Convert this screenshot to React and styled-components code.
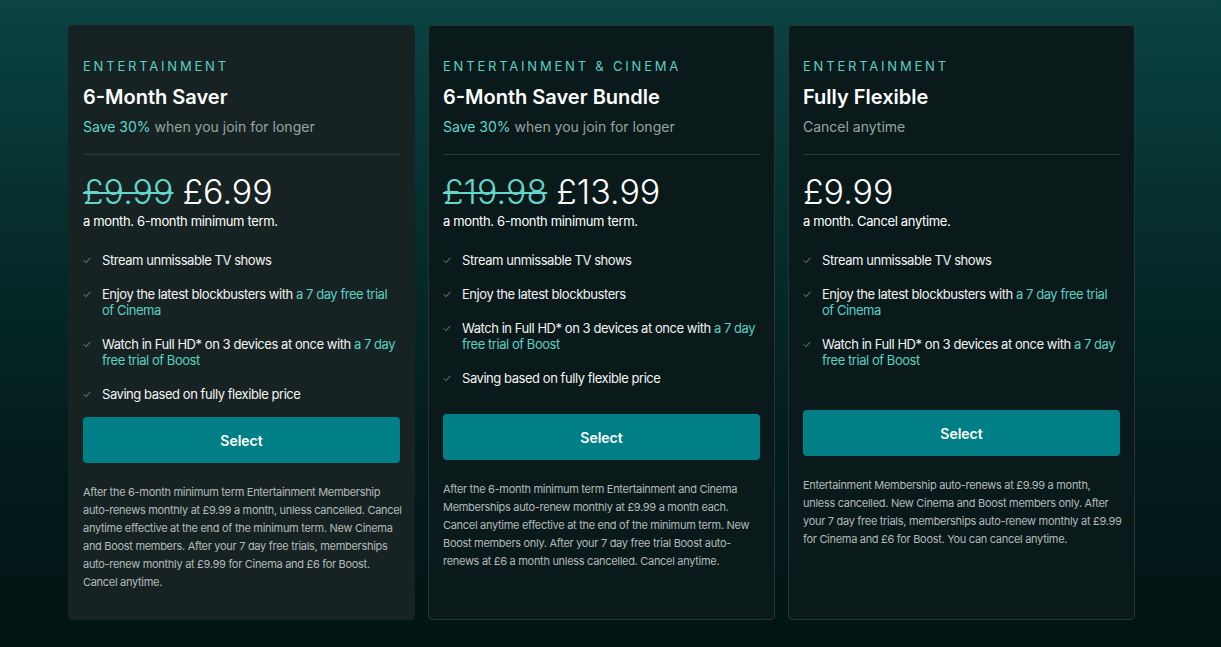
import React from "react";
import styled, { createGlobalStyle } from "styled-components";

const GlobalStyle = createGlobalStyle`
  html, body {
    margin: 0;
    padding: 0;
  }
  body {
    min-height: 647px;
    background: linear-gradient(180deg, #0a4443 0%, #06302f 30%, #031b1b 70%, #021414 100%);
    font-family: Inter, "Noto Sans", "Liberation Sans", sans-serif;
    color: #ffffff;
    -webkit-font-smoothing: antialiased;
  }
`;

const Page = styled.div`
  display: flex;
  gap: 13px;
  padding: 25px 0 0 68px;
  height: 647px;
  box-sizing: border-box;
`;

const Card = styled.div`
  flex: none;
  width: 347px;
  height: 595px;
  box-sizing: border-box;
  padding: 32px 14px 0;
  border-radius: 4px;
  background: ${p => (p.$featured ? "#172322" : "#0a191a")};
  border: 1px solid ${p => (p.$featured ? "#172322" : "#263535")};
`;

const Category = styled.div`
  font-size: 13px;
  line-height: 16px;
  letter-spacing: 2.8px;
  color: #5ccfc3;
  margin-bottom: 10px;
`;

const Title = styled.h2`
  margin: 0 0 7px;
  font-size: 20px;
  line-height: 26px;
  font-weight: 600;
  color: #ffffff;
`;

const Sub = styled.div`
  font-size: 14px;
  line-height: 20px;
  color: #9aa3a3;
  padding-bottom: 17px;
  border-bottom: 1px solid #2d3a3a;
  margin-bottom: 18px;
`;

const Accent = styled.span`
  color: #62d6ca;
`;

const PriceRow = styled.div`
  display: flex;
  align-items: baseline;
  gap: 9px;
  font-size: 34px;
  line-height: 38px;
  font-weight: 300;
  margin-bottom: 1px;
`;

const OldPrice = styled.s`
  color: #62d6ca;
  text-decoration-thickness: 2px;
`;

const Price = styled.span`
  color: #ffffff;
`;

const Term = styled.div`
  font-size: 13px;
  line-height: 18px;
  letter-spacing: -0.35px;
  color: #ffffff;
  margin-bottom: 22px;
`;

const Features = styled.ul`
  list-style: none;
  margin: 0;
  padding: 0;
  display: flex;
  flex-direction: column;
  gap: 18px;
`;

const Feature = styled.li`
  display: flex;
  gap: 11px;
  font-size: 13px;
  line-height: 16px;
  letter-spacing: -0.45px;
  color: #f2f4f4;
`;

const Check = styled.svg`
  flex: none;
  width: 8px;
  height: 16px;
`;

const Link = styled.span`
  color: #5ccfc3;
`;

const SelectButton = styled.button`
  display: block;
  margin-top: ${p => p.$gap}px;
  height: 46px;
  width: 100%;
  border: none;
  border-radius: 4px;
  background: #007f86;
  color: #ffffff;
  font-family: inherit;
  font-size: 14px;
  font-weight: 600;
  cursor: pointer;
`;

const FinePrint = styled.p`
  margin: 20px 0 0;
  font-size: 11px;
  line-height: 18px;
  letter-spacing: -0.3px;
  color: #b3baba;
`;

const FineLine = styled.span`
  display: block;
  white-space: nowrap;
`;

const Tick = () => (
  <Check viewBox="0 0 8 16">
    <path d="M0.8 8.4 L3 10.6 L7.4 5.8" fill="none" stroke="#7d8b8b" strokeWidth="1" />
  </Check>
);

const plans = [
  {
    featured: true,
    category: "ENTERTAINMENT",
    title: "6-Month Saver",
    save: true,
    sub: "when you join for longer",
    old: "£9.99",
    price: "£6.99",
    term: "a month. 6-month minimum term.",
    features: [
      ["Stream unmissable TV shows"],
      ["Enjoy the latest blockbusters with ", "a 7 day free trial of Cinema"],
      ["Watch in Full HD* on 3 devices at once with ", "a 7 day free trial of Boost"],
      ["Saving based on fully flexible price"]
    ],
    gap: 15,
    fine: [
      "After the 6-month minimum term Entertainment Membership",
      "auto-renews monthly at £9.99 a month, unless cancelled. Cancel",
      "anytime effective at the end of the minimum term. New Cinema",
      "and Boost members. After your 7 day free trials, memberships",
      "auto-renew monthly at £9.99 for Cinema and £6 for Boost.",
      "Cancel anytime."
    ]
  },
  {
    category: "ENTERTAINMENT & CINEMA",
    title: "6-Month Saver Bundle",
    save: true,
    sub: "when you join for longer",
    old: "£19.98",
    price: "£13.99",
    term: "a month. 6-month minimum term.",
    features: [
      ["Stream unmissable TV shows"],
      ["Enjoy the latest blockbusters"],
      ["Watch in Full HD* on 3 devices at once with ", "a 7 day free trial of Boost"],
      ["Saving based on fully flexible price"]
    ],
    gap: 28,
    fine: [
      "After the 6-month minimum term Entertainment and Cinema",
      "Memberships auto-renew monthly at £9.99 a month each.",
      "Cancel anytime effective at the end of the minimum term. New",
      "Boost members only. After your 7 day free trial Boost auto-",
      "renews at £6 a month unless cancelled. Cancel anytime."
    ]
  },
  {
    category: "ENTERTAINMENT",
    title: "Fully Flexible",
    sub: "Cancel anytime",
    price: "£9.99",
    term: "a month. Cancel anytime.",
    features: [
      ["Stream unmissable TV shows"],
      ["Enjoy the latest blockbusters with ", "a 7 day free trial of Cinema"],
      ["Watch in Full HD* on 3 devices at once with ", "a 7 day free trial of Boost"]
    ],
    gap: 42,
    fine: [
      "Entertainment Membership auto-renews at £9.99 a month,",
      "unless cancelled. New Cinema and Boost members only. After",
      "your 7 day free trials, memberships auto-renew monthly at £9.99",
      "for Cinema and £6 for Boost. You can cancel anytime."
    ]
  }
];

const App = () => {
  return (
    <>
      <GlobalStyle />
      <Page>
        {plans.map(plan => (
          <Card key={plan.title} $featured={plan.featured}>
            <Category>{plan.category}</Category>
            <Title>{plan.title}</Title>
            <Sub>
              {plan.save && <Accent>Save 30% </Accent>}
              {plan.sub}
            </Sub>
            <PriceRow>
              {plan.old && <OldPrice>{plan.old}</OldPrice>}
              <Price>{plan.price}</Price>
            </PriceRow>
            <Term>{plan.term}</Term>
            <Features>
              {plan.features.map(([text, link]) => (
                <Feature key={text}>
                  <Tick />
                  <span>
                    {text}
                    {link && <Link>{link}</Link>}
                  </span>
                </Feature>
              ))}
            </Features>
            <SelectButton $gap={plan.gap}>Select</SelectButton>
            <FinePrint>
              {plan.fine.map(line => (
                <FineLine key={line}>{line}</FineLine>
              ))}
            </FinePrint>
          </Card>
        ))}
      </Page>
    </>
  );
};

export default App;
